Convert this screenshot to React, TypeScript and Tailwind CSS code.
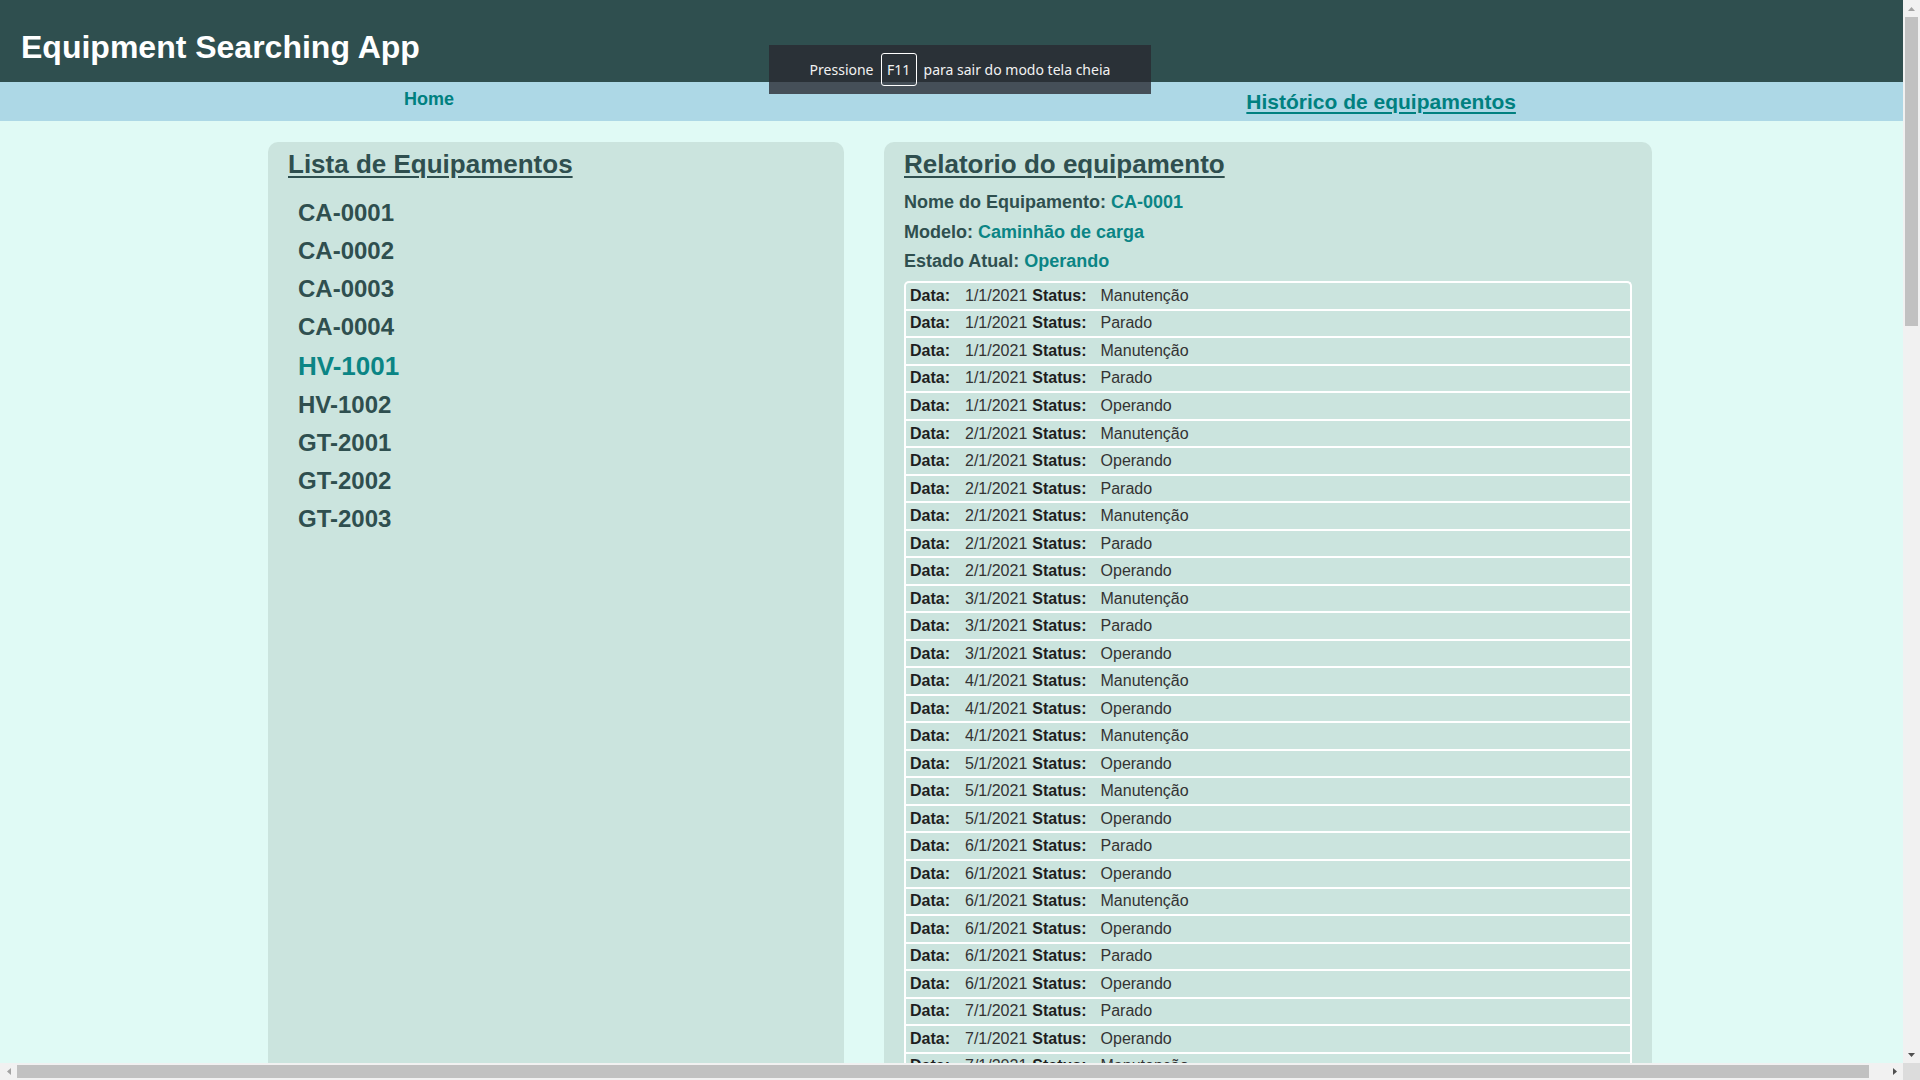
import React from "react";

const firstRows: [string, string][] = [
  ["1/1/2021", "Manutenção"],
  ["1/1/2021", "Parado"],
  ["1/1/2021", "Manutenção"],
  ["1/1/2021", "Parado"],
  ["1/1/2021", "Operando"],
  ["2/1/2021", "Manutenção"],
  ["2/1/2021", "Operando"],
  ["2/1/2021", "Parado"],
  ["2/1/2021", "Manutenção"],
  ["2/1/2021", "Parado"],
  ["2/1/2021", "Operando"],
  ["3/1/2021", "Manutenção"],
  ["3/1/2021", "Parado"],
  ["3/1/2021", "Operando"],
  ["4/1/2021", "Manutenção"],
  ["4/1/2021", "Operando"],
  ["4/1/2021", "Manutenção"],
  ["5/1/2021", "Operando"],
  ["5/1/2021", "Manutenção"],
  ["5/1/2021", "Operando"],
  ["6/1/2021", "Parado"],
  ["6/1/2021", "Operando"],
  ["6/1/2021", "Manutenção"],
  ["6/1/2021", "Operando"],
  ["6/1/2021", "Parado"],
  ["6/1/2021", "Operando"],
  ["7/1/2021", "Parado"],
  ["7/1/2021", "Operando"],
  ["7/1/2021", "Manutenção"],
];

const statuses = ["Operando", "Parado", "Manutenção", "Operando"];
const rows: [string, string][] = [...firstRows];
for (let i = 0; rows.length < 117; i++) {
  const day = 8 + Math.floor(i / 4);
  rows.push([`${day}/1/2021`, statuses[i % 4]]);
}

const equipments = ["CA-0001", "CA-0002", "CA-0003", "CA-0004", "HV-1001", "HV-1002", "GT-2001", "GT-2002", "GT-2003"];

function Tri({ dir, color }: { dir: "up" | "down" | "left" | "right"; color: string }) {
  const pts =
    dir === "up"
      ? "0,4 3.5,0 7,4"
      : dir === "down"
      ? "0,0 7,0 3.5,4"
      : dir === "left"
      ? "4,0 4,7 0,3.5"
      : "0,0 0,7 4,3.5";
  const w = dir === "up" || dir === "down" ? 7 : 4;
  const h = dir === "up" || dir === "down" ? 4 : 7;
  return (
    <svg width={w} height={h} viewBox={`0 0 ${w} ${h}`}>
      <polygon points={pts} fill={color} />
    </svg>
  );
}

export default function App() {
  return (
    <div className="w-screen h-screen flex flex-col overflow-hidden font-['Liberation_Sans',Arial,sans-serif]">
      <div className="flex flex-1 min-h-0">
        <div className="relative flex-1 min-w-0 overflow-hidden bg-[#e0faf5]">
          <div className="w-[1920px]">
            <header className="h-[82px] bg-[#2f4f4f] pl-[21px] pt-[29px]">
              <h1 className="text-[32px] leading-[37px] font-bold text-white">Equipment Searching App</h1>
            </header>
            <nav className="h-[39px] bg-[#add8e6] flex justify-around items-center px-[8px]">
              <span className="text-[18px] font-bold text-[#008080] pb-[5px]">Home</span>
              <span className="text-[21px] font-bold text-[#008080] underline underline-offset-[3px]">Histórico de equipamentos</span>
            </nav>
            <main className="flex justify-center gap-[40px] pt-[21px] pb-[40px]">
              <section className="w-[576px] bg-[#cbe4de] rounded-[10px] px-[20px] pt-[7px]">
                <h2 className="text-[26px] leading-[30px] font-bold text-[#2f4f4f] underline underline-offset-[3px]">Lista de Equipamentos</h2>
                <ul className="mt-[15px] pl-[10px]">
                  {equipments.map((e) => (
                    <li
                      key={e}
                      className={
                        e === "HV-1001"
                          ? "h-[40px] flex items-center text-[26px] font-bold text-[#0b8585]"
                          : "h-[38px] flex items-center text-[24px] font-bold text-[#2f4f4f]"
                      }
                    >
                      {e}
                    </li>
                  ))}
                </ul>
              </section>
              <section className="w-[768px] bg-[#cbe4de] rounded-[10px] px-[20px] pt-[7px] pb-[20px]">
                <h2 className="text-[26px] leading-[30px] font-bold text-[#2f4f4f] underline underline-offset-[3px]">Relatorio do equipamento</h2>
                <div className="mt-[9px] text-[18px] font-bold text-[#2f4f4f]">
                  <p className="h-[29.4px] flex items-center">
                    Nome do Equipamento:&nbsp;<span className="text-[#0b8585]">CA-0001</span>
                  </p>
                  <p className="h-[29.4px] flex items-center">
                    Modelo:&nbsp;<span className="text-[#0b8585]">Caminhão de carga</span>
                  </p>
                  <p className="h-[29.4px] flex items-center">
                    Estado Atual:&nbsp;<span className="text-[#0b8585]">Operando</span>
                  </p>
                </div>
                <div className="mt-[5px] border-2 border-b-0 border-white rounded-t-[5px]">
                  {rows.map(([d, s], i) => (
                    <div key={i} className="h-[27.53px] border-b-2 border-white flex items-center pl-[4px] text-[16px]">
                      <span className="font-bold text-[#1e1e1e]">Data:</span>
                      <span className="ml-[15px] text-[#333333]">{d}</span>
                      <span className="ml-[5px] font-bold text-[#1e1e1e]">Status:</span>
                      <span className="ml-[14px] text-[#333333]">{s}</span>
                    </div>
                  ))}
                </div>
              </section>
            </main>
          </div>
          <div className="absolute left-[769px] top-[45px] w-[382px] h-[49px] bg-[rgba(40,42,50,0.79)] flex items-center justify-center gap-[7px] text-[#f2f2f2] text-[14px] font-['Noto_Sans',sans-serif]">
            <span>Pressione</span>
            <span className="w-[36px] h-[33px] border border-white rounded-[3px] flex items-center justify-center">F11</span>
            <span>para sair do modo tela cheia</span>
          </div>
        </div>
        <div className="w-[17px] bg-[#f1f1f1] flex flex-col items-center">
          <div className="h-[17px] w-full flex items-center justify-center">
            <Tri dir="up" color="#a3a3a3" />
          </div>
          <div className="w-[13px] h-[309px] bg-[#c1c1c1]" />
          <div className="flex-1" />
          <div className="h-[17px] w-full flex items-center justify-center">
            <Tri dir="down" color="#505050" />
          </div>
        </div>
      </div>
      <div className="h-[17px] flex bg-[#f1f1f1]">
        <div className="w-[17px] h-full flex items-center justify-center">
          <Tri dir="left" color="#a3a3a3" />
        </div>
        <div className="flex-1 flex items-center">
          <div className="w-[1852px] h-[13px] bg-[#c1c1c1]" />
        </div>
        <div className="w-[17px] h-full flex items-center justify-center">
          <Tri dir="right" color="#505050" />
        </div>
        <div className="w-[17px] h-full bg-[#dcdcdc]" />
      </div>
    </div>
  );
}
